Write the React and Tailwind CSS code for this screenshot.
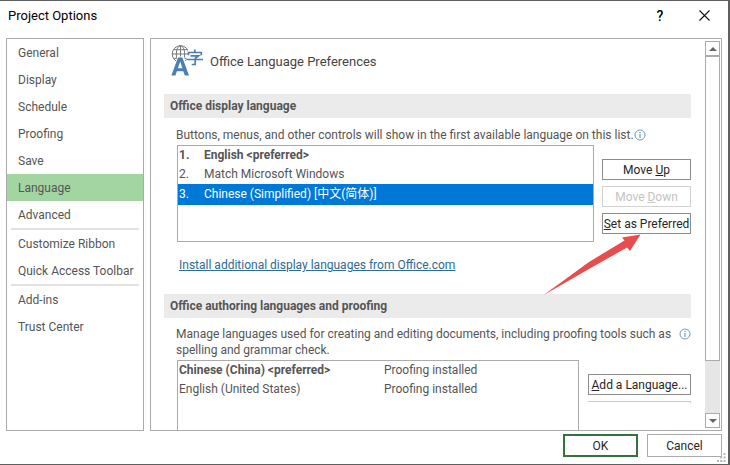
import React from 'react';
import clsx from 'clsx';

const navGroups = [
  ['General', 'Display', 'Schedule', 'Proofing', 'Save', 'Language', 'Advanced'],
  ['Customize Ribbon', 'Quick Access Toolbar'],
  ['Add-ins', 'Trust Center'],
];

const displayLanguages = [
  { name: 'English <preferred>', preferred: true },
  { name: 'Match Microsoft Windows' },
  { name: 'Chinese (Simplified) [中文(简体)]', selected: true },
];

const authoringLanguages = [
  { name: 'Chinese (China) <preferred>', status: 'Proofing installed', preferred: true },
  { name: 'English (United States)', status: 'Proofing installed' },
];

function TitleBar() {
  return (
    <header className="flex h-[37px] shrink-0 items-start pt-1.5 pl-2 pr-[18px] text-black">
      <h1 className="flex-1 text-[13px] leading-[18px]">Project Options</h1>
      <button type="button" aria-label="Help" className="mr-[33px] w-3 text-sm leading-[18px] font-medium">
        ?
      </button>
      <button type="button" aria-label="Close" className="mt-[3px] h-[11px] w-[11px]">
        <svg viewBox="0 0 11 11" className="h-full w-full" stroke="#111" strokeWidth="1.1">
          <path d="M.5 .5l10 10M10.5 .5l-10 10" />
        </svg>
      </button>
    </header>
  );
}

function Sidebar() {
  return (
    <nav className="w-[138px] shrink-0 border border-[#ababab]">
      {navGroups.map((group, i) => (
        <div key={group[0]}>
          {i > 0 && <hr className="mx-1 h-0.5 border-0 bg-[#e1e1e1]" />}
          {group.map((item) => (
            <button
              key={item}
              type="button"
              className={clsx(
                'block h-[27px] w-full pl-[11px] text-left text-xs whitespace-nowrap',
                item === 'Language' && 'bg-[#a3d5a2]'
              )}
            >
              {item}
            </button>
          ))}
        </div>
      ))}
    </nav>
  );
}

function LanguageIcon() {
  return (
    <svg viewBox="0 0 32 32" className="h-8 w-8 shrink-0" fill="none">
      <g stroke="#777" strokeWidth="1">
        <circle cx="9.500" cy="9" r="8.300" />
        <ellipse cx="9.500" cy="9" rx="4.200" ry="8.300" />
        <path d="M9.500 .7v16.600M1.200 9h16.600M2.600 4.700h13.800M2.600 13.300h13.800" />
      </g>
      <path d="M17 5h15v16H15.500v-9H17z" fill="#fff" />
      <path d="M6.500 11.500h6.500l5 19H0z" fill="#fff" />
      <g stroke="#4a7fb0" strokeWidth="1.700">
        <path d="M23.800 4.500v3M17.500 10.200V7.500h12.800v2.700M19.500 10.800h8L24 13.500M15.500 14.500H32M24.200 13.500v6h-3.500" />
      </g>
      <path
        fillRule="evenodd"
        fill="#4a7fb0"
        d="M7 12.500h4.400l6.600 18h-4.200l-1.500-4.300H5.900l-1.500 4.300H.4zM9.200 16.500L6.900 23.200h4.500z"
      />
    </svg>
  );
}

function InfoIcon() {
  return (
    <svg viewBox="0 0 12 12" className="h-3 w-3 shrink-0" fill="none" stroke="#6f9cc4">
      <circle cx="6" cy="6" r="5" />
      <path d="M6 5v4M6 3v1.200" strokeWidth="1.200" />
    </svg>
  );
}

function SectionTitle({ children }) {
  return (
    <h3 className="h-6 bg-[#ebebeb] pl-1.5 text-xs leading-6 font-bold">
      {children}
    </h3>
  );
}

function PushButton({ children, disabled }) {
  return (
    <button
      type="button"
      disabled={disabled}
      className={clsx(
        'h-[21px] w-full border text-xs leading-4 whitespace-nowrap',
        disabled ? 'border-[#d2d2d2] text-[#c3c3c3]' : 'border-[#8c8c8c] text-[#262626]'
      )}
    >
      {children}
    </button>
  );
}

function Scrollbar() {
  return (
    <div className="m-0.5 mr-px flex w-[15px] shrink-0 flex-col bg-[#e6e6e6]">
      <button type="button" aria-label="Scroll up" className="flex h-[15px] items-center justify-center border border-[#ababab] bg-white">
        <svg viewBox="0 0 8 4" className="h-1 w-2" fill="#666">
          <path d="M0 4l4-4 4 4z" />
        </svg>
      </button>
      <div className="flex-[305] border border-[#ababab] bg-white" />
      <div className="flex-[52]" />
      <button type="button" aria-label="Scroll down" className="flex h-[15px] items-center justify-center border border-[#ababab] bg-white">
        <svg viewBox="0 0 8 4" className="h-1 w-2" fill="#666">
          <path d="M0 0l4 4 4-4z" />
        </svg>
      </button>
    </div>
  );
}

function DisplayLanguage() {
  return (
    <section>
      <SectionTitle>Office display language</SectionTitle>
      <div className="mt-2 flex items-center pl-3 text-xs leading-[18px] whitespace-nowrap">
        Buttons, menus, and other controls will show in the first available language on this list.
        <InfoIcon />
      </div>
      <div className="mt-px flex gap-2 pl-[13px]">
        <ol className="h-[97px] flex-1 border border-[#ababab] text-xs leading-[19px]">
          {displayLanguages.map((lang, i) => (
            <li
              key={lang.name}
              className={clsx(
                'flex pl-px',
                lang.preferred && 'font-bold',
                lang.selected && 'bg-[#0078d7] py-px text-white'
              )}
            >
              <span className="w-[25px]">{i + 1}.</span>
              {lang.name}
            </li>
          ))}
        </ol>
        <div className="relative flex w-[89px] flex-col gap-1.5 pt-3.5">
          <PushButton>Move <u>U</u>p</PushButton>
          <PushButton disabled>Move <u>D</u>own</PushButton>
          <PushButton><u>S</u>et as Preferred</PushButton>
          <Arrow />
        </div>
      </div>
      <a href="#install" className="mt-3.5 ml-[15px] inline-block text-xs leading-[18px] text-[#2e6a94] underline">
        Install additional display languages from Office.com
      </a>
    </section>
  );
}

// red pointer lying over the list and the push buttons
function Arrow() {
  return (
    <svg viewBox="0 0 98 62" className="pointer-events-none absolute right-[50px] top-[89px] h-[62px] w-[98px]">
      <path d="M0 61.500L46 28 81.500 6.500 79 3.500 97.500 .5 87 17 84 13.500 46 35z" fill="#e84c4c" />
    </svg>
  );
}

function AuthoringLanguages() {
  return (
    <section className="mt-[18px]">
      <SectionTitle>Office authoring languages and proofing</SectionTitle>
      <div className="mt-2 flex items-start justify-between pl-3">
        <p className="text-xs leading-4 whitespace-nowrap">
          Manage languages used for creating and editing documents, including proofing tools such as
          <br />
          spelling and grammar check.
        </p>
        <div className="pt-0.5">
          <InfoIcon />
        </div>
      </div>
      <div className="mt-0.5 flex gap-[9px] pl-[13px]">
        <div className="h-[120px] flex-1 border border-[#ababab]">
          <table className="w-full text-left text-xs leading-[19px]">
            <tbody>
              {authoringLanguages.map((lang) => (
                <tr key={lang.name}>
                  <td className={clsx('w-[206px] pl-px', lang.preferred && 'font-bold')}>{lang.name}</td>
                  <td>{lang.status}</td>
                </tr>
              ))}
            </tbody>
          </table>
        </div>
        <div className="flex w-[103px] flex-col gap-1.5 pt-3.5">
          <PushButton><u>A</u>dd a Language...</PushButton>
          <div className="h-0.5 border-t border-r border-[#c9c9c9]" />
        </div>
      </div>
    </section>
  );
}

export default function App() {
  return (
    <div className="flex h-screen flex-col border-t border-r-2 border-b border-[#5f5f5f] bg-white font-['Roboto','Noto_Sans_CJK_SC',sans-serif] text-[#555]">
      <TitleBar />
      <div className="flex min-h-0 flex-1 gap-1.5 px-1.5">
        <Sidebar />
        <main className="flex min-w-0 flex-1 border border-[#ababab]">
          <div className="min-w-0 flex-1 overflow-hidden pl-[13px] pr-3">
            <div className="flex h-[55px] items-start gap-[7px] pt-1.5 pl-[7px]">
              <LanguageIcon />
              <h2 className="pt-[7px] text-[13px] leading-5 text-[#444]">Office Language Preferences</h2>
            </div>
            <DisplayLanguage />
            <AuthoringLanguages />
          </div>
          <Scrollbar />
        </main>
      </div>
      <footer className="relative flex h-[33px] shrink-0 justify-end gap-[9px] pt-[3px] pr-1.5 text-[#262626]">
        <button type="button" className="h-[23px] w-[75px] border-2 border-[#35713a] text-xs leading-4">
          OK
        </button>
        <button type="button" className="h-[23px] w-[75px] border border-[#ababab] text-xs leading-4">
          Cancel
        </button>
        <svg viewBox="0 0 9 9" className="absolute right-0.5 bottom-0.5 h-[9px] w-[9px]" fill="#b5b5b5">
          <path d="M6.500 0h2v2h-2zM6.500 3.500h2v2h-2zM3.200 3.500h2v2h-2zM6.500 7h2v2h-2zM3.200 7h2v2h-2zM0 7h2v2H0z" />
        </svg>
      </footer>
    </div>
  );
}
